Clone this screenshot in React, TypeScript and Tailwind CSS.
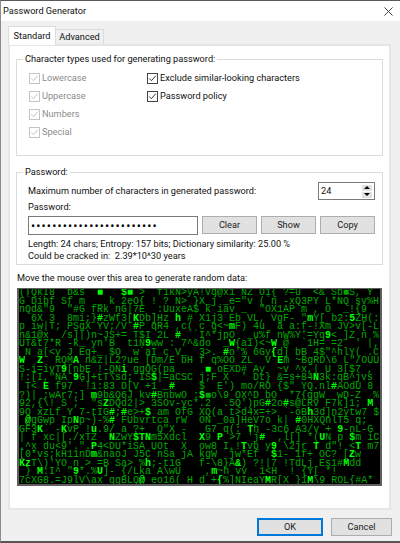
const MATRIX: [string, string][] = [
  ['(TQkI8  b&s  §■   §$§■ >  f1kN>yA', '!Vq@x1 NZ O1{ ?=u  <& Sb■S, Y'],
  ['G`Dibf Sf m  _ k 2eO{ ! ? N> }', 'X_j _e="v (`n -xQ3PY L*NQ sv%H'],
  ['nQd&"9  "#G fRk nG|7E  :UuxeA$', ' k iav _  "OX1AP m , O  _!{9'],
  ['  6X 3  8mi;}§#zWf3[§KDb]Hz §h #', 'X1j3 Eb VL, VgF- "§mY[ b2:§5ZH(:'],
  ['p iw|T; PSgX YV;/V §#P qR4 ,c(', 'c q<~§mF) 4u  a a:f-!Xm JV>v[-L'],
  ['n&1@x  /s]|)n~JS+= T$I 2L §#  `', 'I^*jpO  _u%f nW%Y\'=Yq§9< ]Z n %'],
  ['UT&t7*R -k_ yn\'B  t1N§9ww : 7^&', 'do  _§W{a1)<~§W @  `1H= =2  \' |,'],
  [' N a[<y J Eq+_ $O  w`aI c V_ ', '3>. §#o\'% 6Gy§{d] bB 4$"^hlY( .C'],
  ['§W  §Z  RQM§A n&z|L2?ue [Dm/E bH', 'f q%OO ZL  V §Em ~BgRD\\6 L"/OUU'],
  ['S-i=ivT§9[nbE !-QN§i ggQG(pa', ' §■ oEXD# Ay  ~v ^x,| U 3[$7 ,'],
  ['!:[I,"NA §9G]+tT\\sd; IS§$|=aCSC', 'j;F X  \' Dt} &=s+84§N3k:qB^jvs'],
  [' T< §E f97 `!1:83 D[V +1 _§# ', '$  E\') mo/RO {$" YQ.nl§#AOdU 8'],
  ['?)| ;wAr7;] §m9b&Q6J kv§#BnbwO :', '§$■o\\9 OX^D bO  *7{ggW  wD-Z  %'],
  ['92,{\\! S ;  "s§ZDQd2|> 3SOv-yc*.', '2  .5Q\')pG§#2o§#s@LRv F7k]1; §M'],
  ['9O xzLf Y 7-tIG§#;§#e>+§$ am OfG', 'XQ(a t>d4x=+> `-oB§h3d]n2ytw7 $'],
  [' §@gGwp Ip§Np~)-%§# FUbvrtca rW', 'ON _0a]HeV7o k| §#0HXQnlT5 q;'],
  ['GF3§K` -§KvP !§u.9/ a ?+  Q"X -', ' G7 q(: §Th -3c6 A3/v + §9-nL-G'],
  ['| f xc|[./xTZ  §NZwY§$§T§Nm5Xdcl', '§X9 §P >7 \'j§#  ,l[] *(§UN p §$m iC'],
  ['.^x du<9\'.".§P4<DU*iSA UOt  X', 'ow8 I,!§Tvb y§9 \\2jr §T d"! <§T m7'],
  ['[0*vs;kH11nD§m&naoJ J5C`nSa jA', 'kgW  jw*Ef  §$1- 1f+ OC? [§Zw'],
  ['§K§zT\\)\'YO n > =B Sa> %§h;-t1G', 'f-\\8}A§&) ?!|7 !TdLj Es1#§Mdd'],
  [' } §M:I^ "§9*.%§U]- {/Lka A\\wU', ' ,§m~h vv  1<H  ! {Y[ *!'],
  ['7cXG8.=J9lV\\ax qgBLQ§@ eo16( H', 'd +§{%]NIeaY§MR[X }1§M\\9 ROL{#A*'],
]

// splits one row into runs of bright / normal characters
const toRuns = (text: string) => {
  const runs: { bright: boolean; text: string }[] = []
  let bright = false
  for (const ch of text) {
    if (ch === '§') {
      bright = true
      continue
    }
    const last = runs[runs.length - 1]
    if (last && last.bright === bright) last.text += ch
    else runs.push({ bright, text: ch })
    bright = false
  }
  return runs
}

const LEFT_COLS = 30

const MatrixRow = ({ left, right }: { left: string; right: string }) => {
  const visible = left.replace(/§/g, '').length
  const padded = left + ' '.repeat(Math.max(0, LEFT_COLS - visible)) + right
  return (
    <div className="h-[8.56px] whitespace-pre">
      {toRuns(padded).map((r, i) => (
        <span key={i} className={r.bright ? 'font-bold text-[#00ff00]' : 'text-[#00a800]'}>
          {r.text}
        </span>
      ))}
    </div>
  )
}

const Check = ({ disabled }: { disabled?: boolean }) => (
  <span
    className={`flex h-[11px] w-[11px] shrink-0 items-center justify-center border bg-white ${
      disabled ? 'border-[#c4c4c4]' : 'border-[#444444]'
    }`}
  >
    <svg viewBox="0 0 11 11" className="h-[9px] w-[9px]" fill="none">
      <path
        d="M1.5 5.5 L4.2 8.2 L9.5 2"
        stroke={disabled ? '#c0c0c0' : '#333333'}
        strokeWidth="1.2"
      />
    </svg>
  </span>
)

const CheckRow = ({ label, disabled }: { label: string; disabled?: boolean }) => (
  <div className={`flex h-[18px] items-center gap-[2px] ${disabled ? 'text-[#8c8c8c]' : 'text-[#111111]'}`}>
    <Check disabled={disabled} />
    <span>{label}</span>
  </div>
)

const Btn = ({ label, className }: { label: string; className: string }) => (
  <button className={`flex items-center justify-center bg-[#e1e1e1] text-[#222222] ${className}`}>
    {label}
  </button>
)

export default function App() {
  return (
    <div className="flex h-[543px] w-[400px] flex-col overflow-hidden border-t border-b-2 border-l border-t-[#5a5a5a] border-b-[#555555] border-l-[#8c8c8c] bg-[#f0f0f0] font-['Roboto',sans-serif] text-[9.2px] leading-[14px] text-[#111111]">
      <div className="flex h-[20px] shrink-0 items-center justify-between bg-white pl-[2px] pr-[7px]">
        <span>Password Generator</span>
        <svg viewBox="0 0 10 10" className="h-[9px] w-[9px]" stroke="#333333" strokeWidth="1">
          <path d="M0.5 0.5 L9.5 9.5 M9.5 0.5 L0.5 9.5" />
        </svg>
      </div>

      <div className="flex flex-1 flex-col pl-[7px] pr-[8px] pt-[5px]">
        <div className="relative z-10 flex h-[19px] items-end">
          <div className="flex h-[19px] w-[48px] items-center justify-center border border-b-0 border-[#dcdcdc] bg-white">
            Standard
          </div>
          <div className="mb-[1px] flex h-[15px] w-[48px] items-center justify-center border border-b-0 border-l-0 border-[#dcdcdc] bg-[#f0f0f0]">
            Advanced
          </div>
        </div>

        <div className="-mt-[1px] mr-[1px] flex h-[466px] flex-col border-2 border-[#e6e6e6] bg-white pl-[6px] pr-[6px] pt-[6px]">
          <fieldset className="h-[104px] border border-[#dcdcdc]">
            <legend className="ml-[6px] px-[2px]">Character types used for generating password:</legend>
            <div className="flex pl-[12px] pt-[3px]">
              <div className="w-[118px]">
                <CheckRow label="Lowercase" disabled />
                <CheckRow label="Uppercase" disabled />
                <CheckRow label="Numbers" disabled />
                <CheckRow label="Special" disabled />
              </div>
              <div>
                <CheckRow label="Exclude similar-looking characters" />
                <CheckRow label="Password policy" />
              </div>
            </div>
          </fieldset>

          <fieldset className="mt-[9px] h-[100px] border border-[#dcdcdc]">
            <legend className="ml-[6px] px-[2px]">Password:</legend>
            <div className="pl-[11px] pr-[7px]">
              <div className="mt-[3px] flex h-[18px] items-center justify-between">
                <span>Maximum number of characters in generated password:</span>
                <div className="flex h-[18px] w-[57px] items-center justify-between border border-[#7a7a7a] pl-[2px] pr-[2px]">
                  <span>24</span>
                  <div className="flex flex-col gap-[1px]">
                    <span className="flex h-[6px] w-[10px] items-center justify-center bg-[#e1e1e1]">
                      <span className="h-0 w-0 border-x-[3px] border-b-[3px] border-x-transparent border-b-black" />
                    </span>
                    <span className="flex h-[6px] w-[10px] items-center justify-center bg-[#e1e1e1]">
                      <span className="h-0 w-0 border-x-[3px] border-t-[3px] border-x-transparent border-t-black" />
                    </span>
                  </div>
                </div>
              </div>
              <div className="h-[16px]">Password:</div>
              <div className="flex gap-[4px]">
                <div className="flex h-[19px] w-[170px] items-center border border-[#7a7a7a] pl-[2px] font-['Noto_Sans',sans-serif] text-[11px] tracking-[1.15px] text-black">
                  ••••••••••••••••••••••••
                </div>
                <Btn label="Clear" className="h-[18px] w-[55px] border border-[#adadad]" />
                <Btn label="Show" className="h-[18px] w-[55px] border border-[#adadad]" />
                <Btn label="Copy" className="h-[18px] w-[55px] border border-[#adadad]" />
              </div>
              <div className="mt-[3px] leading-[12px]">Length: 24 chars; Entropy: 157 bits; Dictionary similarity: 25.00 %</div>
              <div className="whitespace-pre leading-[12px]">Could be cracked in:  2.39*10^30 years</div>
            </div>
          </fieldset>

          <div className="mt-[6px] h-[17px] pl-[1px]">Move the mouse over this area to generate random data:</div>
          <div className="mx-[1px] h-[198px] overflow-hidden border-[2px] border-t-[1px] border-[#5f5f5f] bg-black font-['Liberation_Mono',monospace] text-[10px] leading-[8.56px]">
            {MATRIX.map(([left, right], i) => (
              <MatrixRow key={i} left={left} right={right} />
            ))}
          </div>
        </div>

        <div className="mt-[8px] flex justify-end gap-[8px]">
          <Btn label="OK" className="h-[18px] w-[66px] border-2 border-[#0078d7]" />
          <Btn label="Cancel" className="h-[18px] w-[61px] border border-[#adadad]" />
        </div>
      </div>
    </div>
  )
}
